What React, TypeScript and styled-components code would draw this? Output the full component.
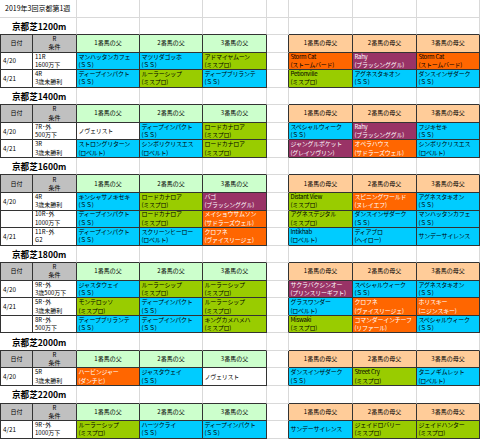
import { FC, Fragment } from "react";
import styled, { createGlobalStyle } from "styled-components";

type Tone = "ss" | "mp" | "or" | "pu" | "wh";

type Sire = {
  name: string;
  line?: string;
  tone: Tone;
  dark?: boolean;
};

type Race = {
  date?: string;
  race: string;
  cond: string;
  sires: Sire[];
  dams: Sire[];
};

type Block = {
  title: string;
  races: Race[];
};

const DARK = "#333";
const GRID = "#d9d9d9";

const toneBg: Record<Tone, string> = {
  ss: "#00ccff",
  mp: "#99cc00",
  or: "#ff6600",
  pu: "#993366",
  wh: "#ffffff",
};

const toneFg: Record<Tone, string> = {
  ss: "#000",
  mp: "#000",
  or: "#fff",
  pu: "#fff",
  wh: "#000",
};

const ss = (name: string): Sire => ({ name, line: "(ＳＳ)", tone: "ss" });
const mp = (name: string): Sire => ({ name, line: "(ミスプロ)", tone: "mp" });
const rb = (name: string): Sire => ({ name, line: "(ロベルト)", tone: "ss" });
const s = (name: string, line: string, tone: Tone): Sire => ({ name, line, tone });
const one = (name: string, tone: Tone): Sire => ({ name, tone });

const blocks: Block[] = [
  {
    title: "京都芝1200m",
    races: [
      {
        date: "4/20",
        race: "11R",
        cond: "1600万下",
        sires: [ss("マンハッタンカフェ"), ss("マツリダゴッホ"), mp("アドマイヤムーン")],
        dams: [
          { ...s("Storm Cat", "(ストームバード)", "or"), dark: true },
          s("Rahy", "(ブラッシンググル)", "pu"),
          { ...s("Storm Cat", "(ストームバード)", "or"), dark: true },
        ],
      },
      {
        date: "4/21",
        race: "4R",
        cond: "3歳未勝利",
        sires: [ss("ディープインパクト"), mp("ルーラーシップ"), ss("ディープブリランテ")],
        dams: [mp("Petionville"), ss("アグネスタキオン"), ss("ダンスインザダーク")],
      },
    ],
  },
  {
    title: "京都芝1400m",
    races: [
      {
        date: "4/20",
        race: "7R･外",
        cond: "500万下",
        sires: [one("ノヴェリスト", "wh"), ss("ディープインパクト"), mp("ロードカナロア")],
        dams: [ss("スペシャルウィーク"), s("Rahy", "(ブラッシンググル)", "pu"), ss("フジキセキ")],
      },
      {
        date: "4/21",
        race: "3R",
        cond: "3歳未勝利",
        sires: [rb("ストロングリターン"), rb("シンボリクリスエス"), mp("ロードカナロア")],
        dams: [
          s("ジャングルポケット", "(グレイソヴリン)", "pu"),
          s("オペラハウス", "(サドラーズウェル)", "or"),
          rb("シンボリクリスエス"),
        ],
      },
    ],
  },
  {
    title: "京都芝1600m",
    races: [
      {
        date: "4/20",
        race: "4R",
        cond: "3歳未勝利",
        sires: [ss("キンシャサノキセキ"), mp("ロードカナロア"), s("バゴ", "(ブラッシンググル)", "pu")],
        dams: [mp("Distant View"), s("スピニングワールド", "(ヌレイエフ)", "or"), ss("アグネスタキオン")],
      },
      {
        race: "10R･外",
        cond: "1000万下",
        sires: [
          ss("ディープインパクト"),
          mp("ロードカナロア"),
          s("メイショウサムソン", "(サドラーズウェル)", "or"),
        ],
        dams: [mp("アグネスデジタル"), ss("ダンスインザダーク"), ss("マンハッタンカフェ")],
      },
      {
        date: "4/21",
        race: "11R･外",
        cond: "G2",
        sires: [ss("ディープインパクト"), rb("スクリーンヒーロー"), s("クロフネ", "(ヴァイスリージェ)", "or")],
        dams: [rb("Intikhab"), s("ディアブロ", "(ヘイロー)", "ss"), one("サンデーサイレンス", "ss")],
      },
    ],
  },
  {
    title: "京都芝1800m",
    races: [
      {
        date: "4/20",
        race: "9R･外",
        cond: "3歳500万下",
        sires: [ss("ジャスタウェイ"), mp("ルーラーシップ"), mp("ルーラーシップ")],
        dams: [
          s("サクラバクシンオー", "(プリンスリーギフト)", "pu"),
          ss("スペシャルウィーク"),
          ss("アグネスタキオン"),
        ],
      },
      {
        date: "4/21",
        race: "5R･外",
        cond: "3歳未勝利",
        sires: [mp("モンテロッソ"), ss("ディープインパクト"), mp("ルーラーシップ")],
        dams: [
          rb("グラスワンダー"),
          s("クロフネ", "(ヴァイスリージェ)", "or"),
          s("ホリスキー", "(ニジンスキー)", "or"),
        ],
      },
      {
        race: "8R･外",
        cond: "500万下",
        sires: [ss("ディープブリランテ"), ss("ディープインパクト"), mp("キングカメハメハ")],
        dams: [mp("Miswaki"), s("コマンダーインチーフ", "(リファール)", "or"), ss("スペシャルウィーク")],
      },
    ],
  },
  {
    title: "京都芝2000m",
    races: [
      {
        date: "4/20",
        race: "5R",
        cond: "3歳未勝利",
        sires: [s("ハービンジャー", "(ダンチヒ)", "or"), ss("ジャスタウェイ"), one("ノヴェリスト", "wh")],
        dams: [ss("ダンスインザダーク"), mp("Street Cry"), rb("タニノギムレット")],
      },
    ],
  },
  {
    title: "京都芝2200m",
    races: [
      {
        date: "4/21",
        race: "9R･外",
        cond: "1000万下",
        sires: [mp("ルーラーシップ"), ss("ハーツクライ"), ss("ディープインパクト")],
        dams: [one("サンデーサイレンス", "ss"), mp("ジェイドロバリー"), mp("ジェイドハンター")],
      },
    ],
  },
];

const GlobalStyle = createGlobalStyle`
  html, body {
    margin: 0;
    padding: 0;
    background: #fff;
  }
  body {
    font-family: "Noto Sans CJK JP", "Noto Sans", sans-serif;
    color: #000;
  }
`;

const Sheet = styled.div`
  display: grid;
  grid-template-columns: 33px 44px 63px 63px 64px 22px 64px 64px 63px;
  grid-template-rows: repeat(25, 17.56px);
  width: 480px;
  height: 439px;
  overflow: hidden;
`;

const Blank = styled.div<{ $under?: boolean; $side?: boolean }>`
  box-sizing: border-box;
  background: #fff;
  border-right: 1px solid ${(p) => (p.$side ? DARK : GRID)};
  border-bottom: 1px solid ${(p) => (p.$under ? DARK : GRID)};
`;

const TitleCell = styled.div`
  grid-column: span 2;
  box-sizing: border-box;
  border-right: 1px solid ${GRID};
  border-bottom: 1px solid ${GRID};
  display: flex;
  align-items: center;
  padding-left: 5px;
  font-size: 7px;
  white-space: nowrap;
`;

const SectionCell = styled.div`
  grid-column: span 2;
  box-sizing: border-box;
  border-right: 1px solid ${GRID};
  border-bottom: 1px solid ${DARK};
  display: flex;
  align-items: center;
  padding-left: 12px;
  font-size: 8.6px;
  font-weight: 700;
  white-space: nowrap;
`;

const headBg = {
  gray: "#c0c0c0",
  sire: "#ccffcc",
  dam: "#ffcc99",
};

const HeadCell = styled.div<{ $kind: keyof typeof headBg; $first?: boolean }>`
  box-sizing: border-box;
  background: ${(p) => headBg[p.$kind]};
  border-right: 1px solid ${DARK};
  border-bottom: 1px solid ${DARK};
  border-left: ${(p) => (p.$first ? `1px solid ${DARK}` : "none")};
  display: flex;
  flex-direction: column;
  align-items: center;
  justify-content: center;
  font-size: 6px;
  line-height: 8.2px;
  white-space: nowrap;
`;

const DateCell = styled.div`
  box-sizing: border-box;
  background: #fff;
  border-left: 1px solid ${DARK};
  border-right: 1px solid ${DARK};
  border-bottom: 1px solid ${DARK};
  display: flex;
  align-items: center;
  padding-left: 2px;
  font-size: 6.3px;
  white-space: nowrap;
`;

const RaceCell = styled.div`
  box-sizing: border-box;
  background: #fff;
  border-right: 1px solid ${DARK};
  border-bottom: 1px solid ${DARK};
  display: flex;
  flex-direction: column;
  justify-content: center;
  padding-left: 2px;
  font-size: 6px;
  line-height: 8.4px;
  white-space: nowrap;
`;

const SireCell = styled.div<{ $tone: Tone; $dark?: boolean }>`
  box-sizing: border-box;
  background: ${(p) => toneBg[p.$tone]};
  color: ${(p) => (p.$dark ? "#000" : toneFg[p.$tone])};
  border-right: 1px solid ${DARK};
  border-bottom: 1px solid ${DARK};
  display: flex;
  flex-direction: column;
  justify-content: center;
  padding-left: 1.5px;
  font-size: 6px;
  line-height: 8.4px;
  letter-spacing: -0.25px;
  white-space: nowrap;
  overflow: hidden;
`;

const Line = styled.span`
  display: block;
`;

const SireBox: FC<{ sire: Sire }> = ({ sire }) => (
  <SireCell $tone={sire.tone} $dark={sire.dark}>
    <Line>{sire.name}</Line>
    {sire.line && <Line>{sire.line}</Line>}
  </SireCell>
);

const BlockRows: FC<{ block: Block }> = ({ block }) => (
  <>
    <SectionCell>{block.title}</SectionCell>
    <Blank $under />
    <Blank $under />
    <Blank $under />
    <Blank />
    <Blank $under />
    <Blank $under />
    <Blank $under />

    <HeadCell $kind="gray" $first>
      日付
    </HeadCell>
    <HeadCell $kind="gray">
      <Line>R</Line>
      <Line>条件</Line>
    </HeadCell>
    {[1, 2, 3].map((n) => (
      <HeadCell key={`s${n}`} $kind="sire">
        {n}番馬の父
      </HeadCell>
    ))}
    <Blank $side />
    {[1, 2, 3].map((n) => (
      <HeadCell key={`d${n}`} $kind="dam">
        {n}番馬の母父
      </HeadCell>
    ))}

    {block.races.map((r, i) => (
      <Fragment key={i}>
        <DateCell>{r.date}</DateCell>
        <RaceCell>
          <Line>{r.race}</Line>
          <Line>{r.cond}</Line>
        </RaceCell>
        {r.sires.map((x, j) => (
          <SireBox key={`s${j}`} sire={x} />
        ))}
        <Blank $side />
        {r.dams.map((x, j) => (
          <SireBox key={`d${j}`} sire={x} />
        ))}
      </Fragment>
    ))}
  </>
);

const App: FC = () => (
  <>
    <GlobalStyle />
    <Sheet>
      <TitleCell>2019年3回京都第1週</TitleCell>
      {Array.from({ length: 7 }, (_, i) => (
        <Blank key={i} />
      ))}
      {blocks.map((b) => (
        <BlockRows key={b.title} block={b} />
      ))}
    </Sheet>
  </>
);

export default App;
